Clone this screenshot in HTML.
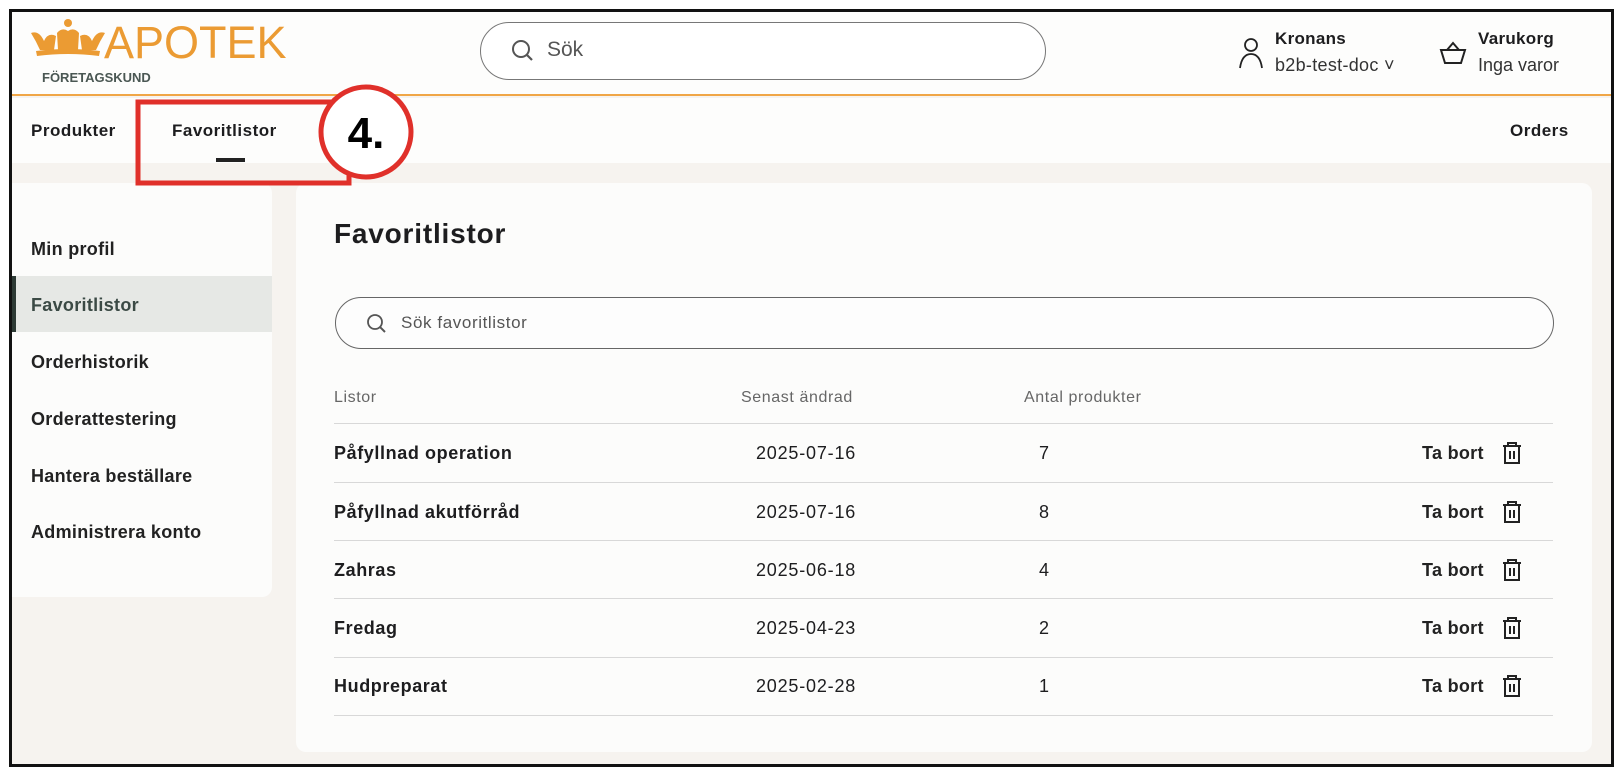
<!DOCTYPE html>
<html><head><meta charset="utf-8"><style>
*{box-sizing:border-box;margin:0;padding:0}
body{width:1618px;height:776px;background:#fff;font-family:"Liberation Sans",sans-serif;color:#1d1d1f;position:relative;overflow:hidden}
.frame{position:absolute;left:9px;top:9px;width:1605px;height:758px;border:3px solid #111;background:#f6f3ef;overflow:hidden}
.abs{position:absolute}
.hdr{left:0;top:0;width:1600px;height:84px;background:#fdfdfc;border-bottom:2px solid #f0a646}
.nav{left:0;top:86px;width:1600px;height:65px;background:#fdfdfc}
.b{font-weight:bold}
.card{background:#fcfcfb;border-radius:10px}
.side div{position:absolute;left:19px;font-size:18px;font-weight:bold;color:#222;letter-spacing:0.3px}
.row{position:absolute;left:322px;width:1219px;border-top:1.5px solid #d8d8d8}
.t{position:absolute;font-size:18px;letter-spacing:0.6px}
.n{font-size:18px;letter-spacing:0.8px}
</style></head><body>
<div class="frame">
 <div class="abs hdr">
  <svg class="abs" style="left:18px;top:5px" width="76" height="42" viewBox="0 0 76 42">
   <g fill="#eb9b33">
    <path d="M1 16 Q9 13 14 24 Q18 15 26 19 L24 33 L10 33 Q6 24 1 16 Z"/>
    <path d="M75 16 Q67 13 62 24 Q58 15 50 19 L52 33 L66 33 Q70 24 75 16 Z"/>
    <path d="M27 16 Q32 10 38 14 Q44 10 49 16 L48 33 L28 33 Z"/>
    <circle cx="38" cy="6" r="4"/>
    <path d="M6 34 Q38 30 70 34 L69 39 Q38 35 7 39 Z"/>
   </g>
  </svg>
  <div class="abs" style="left:92px;top:5px;font-size:45px;color:#eb9b33">APOTEK</div>
  <div class="abs b" style="left:30px;top:58px;font-size:13px;color:#4a5753">FÖRETAGSKUND</div>
  <div class="abs" style="left:468px;top:10px;width:566px;height:58px;border:1.5px solid #777;border-radius:29px;background:#fff"></div>
  <svg class="abs" style="left:499px;top:27px" width="24" height="24" viewBox="0 0 24 24"><circle cx="10" cy="10" r="8" fill="none" stroke="#555" stroke-width="2"/><path d="M16 16l5 5" stroke="#555" stroke-width="2.2"/></svg>
  <div class="abs" style="left:535px;top:26px;font-size:21px;color:#555">Sök</div>
  <svg class="abs" style="left:1226px;top:24px" width="26" height="34" viewBox="0 0 26 34"><circle cx="13" cy="9" r="6" fill="none" stroke="#222" stroke-width="1.8"/><path d="M2 32 Q4 18 13 18 Q22 18 24 32" fill="none" stroke="#222" stroke-width="1.8"/></svg>
  <div class="abs b" style="left:1263px;top:17px;font-size:17px;letter-spacing:0.3px">Kronans</div>
  <div class="abs" style="left:1263px;top:43px;font-size:18px;color:#333;letter-spacing:0.3px">b2b-test-doc ˅</div>
  <svg class="abs" style="left:1427px;top:28px" width="28" height="26" viewBox="0 0 28 26"><path d="M8 10 L14 3 L20 10 M2 10 H26 L22 23 H6 Z" fill="none" stroke="#222" stroke-width="2"/></svg>
  <div class="abs b" style="left:1466px;top:17px;font-size:17px;letter-spacing:0.3px">Varukorg</div>
  <div class="abs" style="left:1466px;top:43px;font-size:18px;color:#333">Inga varor</div>
 </div>
 <div class="abs nav">
  <div class="abs b" style="left:19px;top:23px;font-size:17px;letter-spacing:0.5px">Produkter</div>
  <div class="abs b" style="left:160px;top:23px;font-size:17px;letter-spacing:0.5px">Favoritlistor</div>
  <div class="abs" style="left:204px;top:60px;width:29px;height:4px;background:#222"></div>
  <div class="abs b" style="left:1498px;top:23px;font-size:17px;letter-spacing:0.5px">Orders</div>
 </div>
 <div class="abs card side" style="left:0;top:171px;width:260px;height:414px;border-radius:0 10px 10px 0">
  <div style="top:56px">Min profil</div>
  <div style="top:93px;left:0;width:260px;height:56px;background:#e6e8e5;border-left:4px solid #2d3a35"></div>
  <div style="top:112px;color:#3b4a45">Favoritlistor</div>
  <div style="top:169px">Orderhistorik</div>
  <div style="top:226px">Orderattestering</div>
  <div style="top:283px">Hantera beställare</div>
  <div style="top:339px">Administrera konto</div>
 </div>
 <div class="abs card" style="left:284px;top:171px;width:1296px;height:569px"></div>
 <div class="abs b" style="left:322px;top:206px;font-size:28px;letter-spacing:0.8px">Favoritlistor</div>
 <div class="abs" style="left:323px;top:285px;width:1219px;height:52px;border:1.5px solid #666;border-radius:26px;background:#fdfdfd"></div>
 <svg class="abs" style="left:354px;top:301px" width="22" height="22" viewBox="0 0 22 22"><circle cx="9" cy="9" r="7" fill="none" stroke="#555" stroke-width="1.8"/><path d="M14 14l5 5" stroke="#555" stroke-width="2"/></svg>
 <div class="abs" style="left:389px;top:301px;font-size:17px;color:#555;letter-spacing:0.6px">Sök favoritlistor</div>
 <div class="t" style="left:322px;top:377px;font-size:16px;color:#666">Listor</div>
 <div class="t" style="left:729px;top:377px;font-size:16px;color:#666">Senast ändrad</div>
 <div class="t" style="left:1012px;top:377px;font-size:16px;color:#666">Antal produkter</div>
 <div class="row" style="top:411px"></div><div class="row" style="top:470px"></div><div class="row" style="top:528px"></div><div class="row" style="top:586px"></div><div class="row" style="top:645px"></div><div class="row" style="top:703px"></div>
 <div class="t b" style="left:322px;top:431px">Påfyllnad operation</div>
 <div class="t b" style="left:322px;top:490px">Påfyllnad akutförråd</div>
 <div class="t b" style="left:322px;top:548px">Zahras</div>
 <div class="t b" style="left:322px;top:606px">Fredag</div>
 <div class="t b" style="left:322px;top:664px">Hudpreparat</div>
 <div class="t n" style="left:744px;top:431px">2025-07-16</div>
 <div class="t n" style="left:744px;top:490px">2025-07-16</div>
 <div class="t n" style="left:744px;top:548px">2025-06-18</div>
 <div class="t n" style="left:744px;top:606px">2025-04-23</div>
 <div class="t n" style="left:744px;top:664px">2025-02-28</div>
 <div class="t" style="left:1027px;top:431px">7</div>
 <div class="t" style="left:1027px;top:490px">8</div>
 <div class="t" style="left:1027px;top:548px">4</div>
 <div class="t" style="left:1027px;top:606px">2</div>
 <div class="t" style="left:1027px;top:664px">1</div>
 <svg class="abs" style="left:0;top:0" width="1600" height="760">
  <defs><g id="tr"><text x="0" y="0" font-family="Liberation Sans" font-weight="bold" font-size="18" letter-spacing="0.3" fill="#222">Ta bort</text>
   <path d="M81 -13 H99 M86 -13 V-16 H94 V-13 M83 -13 V4 H97 V-13 M88 -8 V0 M92 -8 V0" fill="none" stroke="#222" stroke-width="2"/></g></defs>
  <use href="#tr" x="1410" y="447"/><use href="#tr" x="1410" y="506"/><use href="#tr" x="1410" y="564"/><use href="#tr" x="1410" y="622"/><use href="#tr" x="1410" y="680"/>
  <rect x="126" y="90" width="211" height="81" fill="none" stroke="#e0302a" stroke-width="5"/>
  <circle cx="354" cy="120" r="45" fill="#fff" stroke="#e0302a" stroke-width="5"/>
  <text x="354" y="136" text-anchor="middle" font-family="Liberation Sans" font-weight="bold" font-size="44" fill="#000">4.</text>
 </svg>
</div>
</body></html>
